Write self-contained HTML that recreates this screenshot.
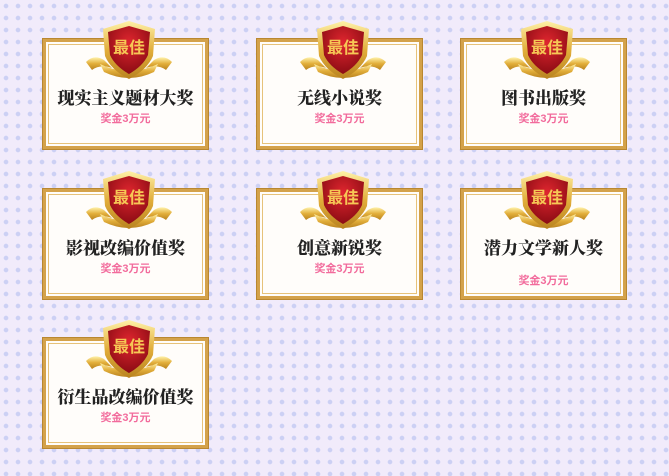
<!DOCTYPE html><html><head><meta charset="utf-8"><style>
body{margin:0;width:669px;height:476px;overflow:hidden;background:#f1ebfb;position:relative;font-family:"Liberation Sans","Noto Sans CJK SC",sans-serif}
.bg{position:absolute;inset:0;background-image:radial-gradient(circle,#c6cbf3 2px,transparent 2.6px);background-size:12px 12px;opacity:.85}
.card{position:absolute;width:165px;height:110px;box-sizing:border-box;border:3px solid #d4a24a;background:#fffdfa;box-shadow:0 0 0 1px #b98730}
.card:before{content:"";position:absolute;inset:2px;border:1px solid #e6c27a}
.t{position:absolute;left:0;right:0;text-align:center;font-family:"Noto Serif CJK SC",serif;font-weight:900;font-size:17px;color:#222;top:42px}
.p{position:absolute;left:0;right:0;text-align:center;font-size:11px;font-weight:bold;color:#f26b9c;top:68px}
.b{position:absolute;top:-22px;left:36px}
</style></head><body><div class="bg"></div>
<svg width="0" height="0" style="position:absolute"><defs>
<linearGradient id="g" x1="0" y1="0" x2="0" y2="1"><stop offset="0" stop-color="#fff1a8"/><stop offset=".5" stop-color="#e2ae3a"/><stop offset="1" stop-color="#b98320"/></linearGradient>
<radialGradient id="r" cx=".5" cy=".35" r=".7"><stop offset="0" stop-color="#e0262f"/><stop offset="1" stop-color="#850a12"/></radialGradient>
<g id="badge"><path d="M4 42 Q12 34 22 40 L30 48 Q18 44 10 50 Z M90 42 Q82 34 72 40 L64 48 Q76 44 84 50 Z" fill="url(#g)"/>
<path d="M18 44 Q47 58 76 44 L72 52 Q47 64 22 52Z" fill="url(#g)"/>
<path d="M47 1 L73 9 L71 36 Q65 50 47 59 Q29 50 23 36 L21 9Z" fill="url(#g)"/>
<path d="M47 6 L68 12 L66 35 Q61 46 47 54 Q33 46 28 35 L26 12Z" fill="url(#r)"/>
<text x="47" y="33" text-anchor="middle" font-family="Noto Sans CJK SC,sans-serif" font-weight="bold" font-size="16" fill="#f6c855">最佳</text></g></defs></svg>
<div class="card" style="left:43px;top:39px"><svg class="b" width="94" height="62"><use href="#badge"/></svg><div class="t">现实主义题材大奖</div><div class="p">奖金3万元</div></div>
<div class="card" style="left:257px;top:39px"><svg class="b" width="94" height="62"><use href="#badge"/></svg><div class="t">无线小说奖</div><div class="p">奖金3万元</div></div>
<div class="card" style="left:461px;top:39px"><svg class="b" width="94" height="62"><use href="#badge"/></svg><div class="t">图书出版奖</div><div class="p">奖金3万元</div></div>
<div class="card" style="left:43px;top:189px"><svg class="b" width="94" height="62"><use href="#badge"/></svg><div class="t">影视改编价值奖</div><div class="p">奖金3万元</div></div>
<div class="card" style="left:257px;top:189px"><svg class="b" width="94" height="62"><use href="#badge"/></svg><div class="t">创意新锐奖</div><div class="p">奖金3万元</div></div>
<div class="card" style="left:461px;top:189px"><svg class="b" width="94" height="62"><use href="#badge"/></svg><div class="t">潜力文学新人奖</div><div class="p" style="top:80px">奖金3万元</div></div>
<div class="card" style="left:43px;top:338px"><svg class="b" width="94" height="62"><use href="#badge"/></svg><div class="t">衍生品改编价值奖</div><div class="p">奖金3万元</div></div>
</body></html>
